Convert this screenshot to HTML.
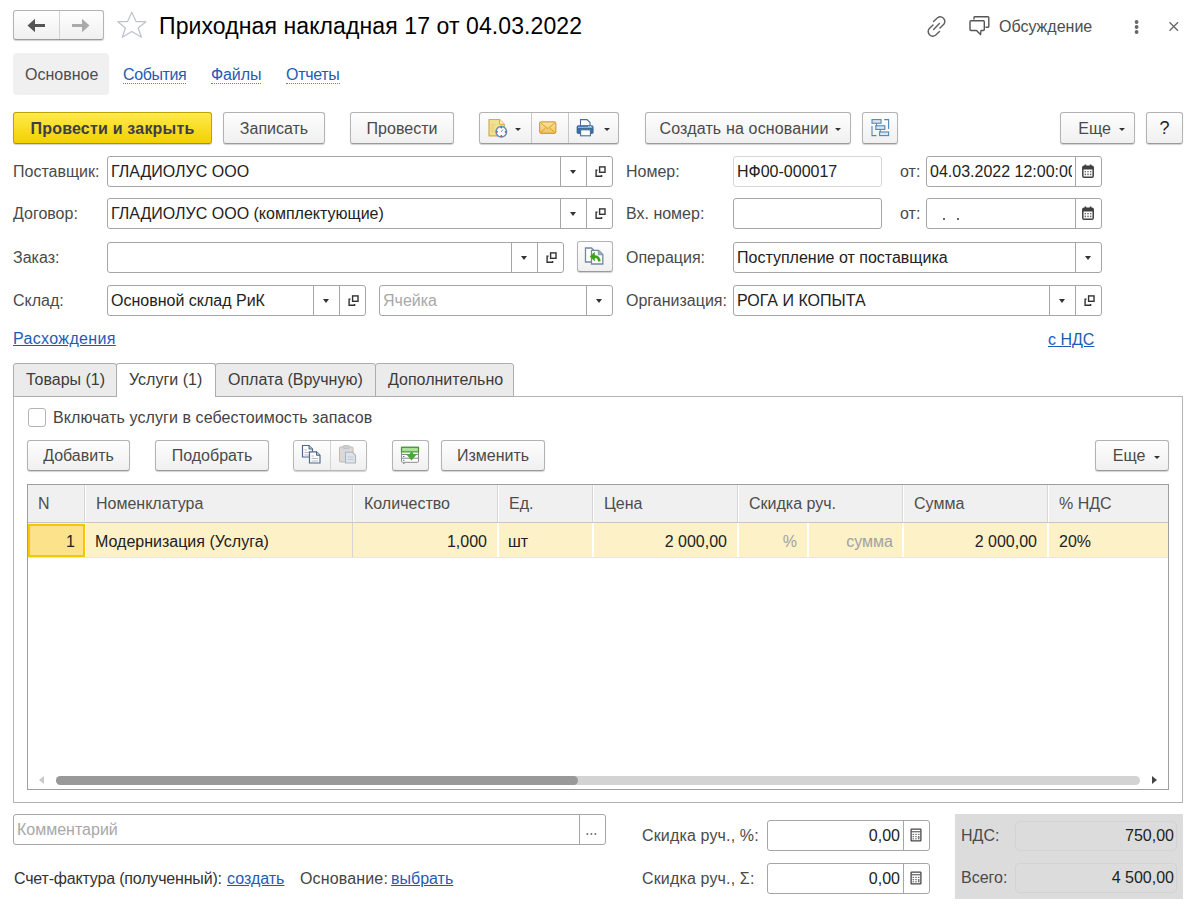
<!DOCTYPE html>
<html><head><meta charset="utf-8">
<style>
*{box-sizing:border-box;margin:0;padding:0}
html,body{width:1200px;height:910px;overflow:hidden;background:#fff}
body{position:relative;font-family:"Liberation Sans",sans-serif;font-size:16px;color:#222}
.a{position:absolute}
.t{position:absolute;white-space:nowrap;line-height:18px}
.btn{position:absolute;border:1px solid #b3b3b3;border-bottom-color:#9a9a9a;border-radius:3px;background:linear-gradient(#fefefe,#f0f0f0);box-shadow:0 1px 1px rgba(0,0,0,.18)}
.inp{position:absolute;border:1px solid #a6a6a6;background:#fff}
.u{text-decoration:underline}
.dot{border-bottom:1px dotted #5b86c5}
svg{overflow:visible}
</style></head><body>
<div class="btn" style="left:13px;top:10px;width:91px;height:30px;"></div>
<div class="a" style="left:59px;top:11px;width:1px;height:28px;background:#d2d2d2"></div>
<svg class="a" style="left:0;top:0" width="1200" height="50" viewBox="0 0 1200 50">
<path d="M27.5 25.5 L35 18.8 L35 32.2 Z" fill="#555"/><rect x="34" y="24" width="11" height="3" fill="#555"/>
<path d="M89.5 25.5 L82 18.8 L82 32.2 Z" fill="#aaa"/><rect x="72" y="24" width="11" height="3" fill="#aaa"/>
<path d="M131.8 12.3 L136 21.6 L145.8 21.7 L138.2 28 L141.4 37.3 L131.8 31.4 L122.3 37.3 L125.4 28 L117.9 21.7 L127.6 21.6 Z" fill="none" stroke="#bcc3cb" stroke-width="1.2" stroke-linejoin="round"/>
<g fill="none" stroke="#5e5e5e" stroke-width="1.4" stroke-linecap="round">
<path d="M933.5 21.5 L937.5 17.8 Q940.5 15.6 943.5 18.3 Q946 21.3 943.8 24.3 L940 28"/>
<path d="M939.5 31.5 L935.5 35.2 Q932.5 37.4 929.5 34.7 Q927 31.7 929.2 28.7 L933 25"/>
<path d="M933.6 29.4 L939.4 23.6"/>
</g>
<g fill="none" stroke="#555" stroke-width="1.4" stroke-linejoin="round">
<path d="M974 19.5 V17.5 Q974 16.8 975 16.8 H987.8 Q988.8 16.8 988.8 17.8 V26.5 Q988.8 27.2 988 27.3 H985.5"/>
<path d="M971 20.8 H983.3 Q984.3 20.8 984.3 21.8 V29.6 Q984.3 30.5 983.3 30.5 H981 L980.5 34.6 L976.5 30.5 H971 Q970 30.5 970 29.5 V21.8 Q970 20.8 971 20.8 Z"/>
</g>
<g fill="#666"><circle cx="1136.6" cy="22" r="1.9"/><circle cx="1136.6" cy="27" r="1.9"/><circle cx="1136.6" cy="32" r="1.9"/></g>
<path d="M1169.5 22.3 L1178 30.8 M1178 22.3 L1169.5 30.8" stroke="#666" stroke-width="1.3"/>
</svg>
<div class="t" style="left:159px;top:13px;color:#000;font-size:23px;line-height:26px;letter-spacing:0.1px;">Приходная накладная 17 от 04.03.2022</div>
<div class="t" style="left:999px;top:18px;color:#4d4d4d;font-size:16px;">Обсуждение</div>
<div class="a" style="left:13px;top:53px;width:96px;height:42px;background:#f0f0f0;border-radius:4px"></div>
<div class="t" style="left:25px;top:66px;color:#4d4d4d;font-size:16px;">Основное</div>
<div class="t" style="left:123px;top:66px;color:#1f5bb5;letter-spacing:-0.4px;line-height:17px"><span class="dot">События</span></div>
<div class="t" style="left:211px;top:66px;color:#1f5bb5;letter-spacing:-0.1px;line-height:17px"><span class="dot">Файлы</span></div>
<div class="t" style="left:286px;top:66px;color:#1f5bb5;letter-spacing:-0.3px;line-height:17px"><span class="dot">Отчеты</span></div>
<div class="btn" style="left:13px;top:112px;width:199px;height:32px;background:linear-gradient(#ffea4d,#f2d000);border-color:#bba300;border-bottom-color:#a89200"></div>
<div class="t" style="left:13px;top:120px;width:199px;text-align:center;color:#3d3d45;font-weight:bold;margin-left:0px;letter-spacing:0.2px">Провести и закрыть</div>
<div class="btn" style="left:223px;top:112px;width:102px;height:32px;"></div>
<div class="t" style="left:223px;top:120px;width:102px;text-align:center;color:#4a4a4a;margin-left:0px;">Записать</div>
<div class="btn" style="left:350px;top:112px;width:104px;height:32px;"></div>
<div class="t" style="left:350px;top:120px;width:104px;text-align:center;color:#4a4a4a;margin-left:0px;">Провести</div>
<div class="btn" style="left:479px;top:112px;width:140px;height:32px;"></div>
<div class="a" style="left:531px;top:113px;width:1px;height:30px;background:#c8c8c8"></div>
<div class="a" style="left:568px;top:113px;width:1px;height:30px;background:#c8c8c8"></div>
<div class="btn" style="left:645px;top:112px;width:206px;height:32px;"></div>
<div class="t" style="left:645px;top:120px;width:206px;text-align:center;color:#4a4a4a;margin-left:-4px;letter-spacing:0.15px">Создать на основании</div>
<div class="a" style="left:835.0px;top:128px;width:0;height:0;border-left:3.0px solid transparent;border-right:3.0px solid transparent;border-top:3.5px solid #333"></div>
<div class="btn" style="left:862px;top:112px;width:36px;height:32px;"></div>
<div class="btn" style="left:1060px;top:112px;width:75px;height:32px;"></div>
<div class="t" style="left:1060px;top:120px;width:75px;text-align:center;color:#4a4a4a;margin-left:-3px;">Еще</div>
<div class="a" style="left:1119.0px;top:128.3px;width:0;height:0;border-left:3.5px solid transparent;border-right:3.5px solid transparent;border-top:3.5px solid #333"></div>
<div class="btn" style="left:1146px;top:112px;width:37px;height:32px;"></div>
<div class="t" style="left:1146px;top:118px;color:#222;font-size:18px;width:37px;text-align:center;line-height:20px;">?</div>
<svg class="a" style="left:0;top:100px" width="1200" height="50" viewBox="0 100 1200 50">
<path d="M489 119.5 H499.5 L504.3 124.3 V135.8 H489 Z" fill="#f3e08e" stroke="#d1ad4c" stroke-width="1.2" stroke-linejoin="round"/>
<path d="M499.5 119.5 V124.3 H504.3" fill="#fff6c8" stroke="#d1ad4c" stroke-width="1"/>
<g stroke="#d8c480" stroke-width="0.9"><path d="M491 125 H495 M491 128 H494 M491 131 H494"/></g>
<circle cx="501.3" cy="131.8" r="5.3" fill="#fff" stroke="#5a8fc8" stroke-width="1.5"/>
<g fill="#e53030"><circle cx="501.3" cy="127.6" r="0.9"/><circle cx="501.3" cy="136" r="0.9"/><circle cx="497.1" cy="131.8" r="0.9"/><circle cx="505.5" cy="131.8" r="0.9"/></g>
<path d="M501 132 L503 129.5" stroke="#5a8fc8" stroke-width="1"/>
<rect x="539.6" y="121.8" width="16.2" height="11.6" rx="1.8" fill="url(#env)" stroke="#d9a030" stroke-width="1.2"/>
<defs><linearGradient id="env" x1="0" y1="0" x2="0" y2="1"><stop offset="0" stop-color="#fbe3a4"/><stop offset="1" stop-color="#f0c060"/></linearGradient></defs>
<path d="M540.5 122.8 L547.7 128.8 L554.9 122.8 M540.5 132.8 L545.5 128 M554.9 132.8 L549.9 128" fill="none" stroke="#d9a030" stroke-width="1"/>
<path d="M580.5 119.6 H587 L590 122.6 V126 H580.5 Z" fill="#fff" stroke="#4a6f96" stroke-width="1.1"/>
<rect x="576.6" y="125.2" width="17" height="8.8" rx="1.8" fill="#3d6d9f"/>
<rect x="578" y="126.8" width="14.2" height="1" fill="#a8c4e0"/>
<rect x="590" y="126" width="1.2" height="1" fill="#d0e0f0"/><rect x="588.2" y="126" width="1.2" height="1" fill="#d0e0f0"/>
<rect x="580.6" y="129.8" width="9.8" height="6" fill="#fff" stroke="#4a6f96" stroke-width="1.1"/>
<g fill="#d9e8f4" stroke="#4f86bb" stroke-width="1.1">
<rect x="872" y="119.6" width="9" height="3.6"/>
<rect x="875.8" y="125.8" width="9" height="3.6"/>
<rect x="879.6" y="132" width="9" height="3.6"/>
</g>
<path d="M876.5 123.5 V125.8 M880.3 129.7 V132" stroke="#4f86bb" stroke-width="1"/>
<path d="M872 126 V135.6 H876.5 M888.6 129 V119.6 H884.2" fill="none" stroke="#4f86bb" stroke-width="1.1"/>
</svg>
<div class="a" style="left:514.5px;top:128px;width:0;height:0;border-left:3.5px solid transparent;border-right:3.5px solid transparent;border-top:3.5px solid #333"></div>
<div class="a" style="left:603.5px;top:128px;width:0;height:0;border-left:3.5px solid transparent;border-right:3.5px solid transparent;border-top:3.5px solid #333"></div>
<div class="t" style="left:13px;top:163px;color:#4a4a4a;font-size:16px;">Поставщик:</div>
<div class="t" style="left:13px;top:205px;color:#4a4a4a;font-size:16px;">Договор:</div>
<div class="t" style="left:13px;top:249px;color:#4a4a4a;font-size:16px;">Заказ:</div>
<div class="t" style="left:13px;top:292px;color:#4a4a4a;font-size:16px;">Склад:</div>
<div class="inp" style="left:107px;top:156px;width:506px;height:31px;border-color:#a6a6a6;border-radius:3px"></div>
<div class="a" style="left:560px;top:157px;width:1px;height:29px;background:#a6a6a6"></div>
<div class="a" style="left:586px;top:157px;width:1px;height:29px;background:#a6a6a6"></div>
<div class="t" style="left:111px;top:163px;color:#222;font-size:16px;">ГЛАДИОЛУС ООО</div>
<div class="a" style="left:570.0px;top:169.5px;width:0;height:0;border-left:3.5px solid transparent;border-right:3.5px solid transparent;border-top:4px solid #333"></div>
<svg class="a" style="left:593.0px;top:165.0px" width="14" height="14" viewBox="0 0 14 14"><rect x="6.6" y="1.9" width="5.4" height="5.4" fill="none" stroke="#333" stroke-width="1.4"/><path d="M4.6 5.1 H3.1 V11.2 H8.6 V10" fill="none" stroke="#333" stroke-width="1.4"/></svg>
<div class="inp" style="left:107px;top:198px;width:506px;height:31px;border-color:#a6a6a6;border-radius:3px"></div>
<div class="a" style="left:560px;top:199px;width:1px;height:29px;background:#a6a6a6"></div>
<div class="a" style="left:586px;top:199px;width:1px;height:29px;background:#a6a6a6"></div>
<div class="t" style="left:111px;top:205px;color:#222;font-size:16px;">ГЛАДИОЛУС ООО (комплектующие)</div>
<div class="a" style="left:570.0px;top:211.5px;width:0;height:0;border-left:3.5px solid transparent;border-right:3.5px solid transparent;border-top:4px solid #333"></div>
<svg class="a" style="left:593.0px;top:207.0px" width="14" height="14" viewBox="0 0 14 14"><rect x="6.6" y="1.9" width="5.4" height="5.4" fill="none" stroke="#333" stroke-width="1.4"/><path d="M4.6 5.1 H3.1 V11.2 H8.6 V10" fill="none" stroke="#333" stroke-width="1.4"/></svg>
<div class="inp" style="left:107px;top:242px;width:457px;height:31px;border-color:#a6a6a6;border-radius:3px"></div>
<div class="a" style="left:511px;top:243px;width:1px;height:29px;background:#a6a6a6"></div>
<div class="a" style="left:537px;top:243px;width:1px;height:29px;background:#a6a6a6"></div>
<div class="a" style="left:521.0px;top:255.5px;width:0;height:0;border-left:3.5px solid transparent;border-right:3.5px solid transparent;border-top:4px solid #333"></div>
<svg class="a" style="left:544.0px;top:251.0px" width="14" height="14" viewBox="0 0 14 14"><rect x="6.6" y="1.9" width="5.4" height="5.4" fill="none" stroke="#333" stroke-width="1.4"/><path d="M4.6 5.1 H3.1 V11.2 H8.6 V10" fill="none" stroke="#333" stroke-width="1.4"/></svg>
<div class="btn" style="left:577px;top:241px;width:36px;height:31px;"></div>
<svg class="a" style="left:0;top:0" width="1" height="1" viewBox="0 0 1 1">
<path d="M585.5 248 H591.5 L594 250.5 V262 H585.5 Z" fill="#fff" stroke="#6f8a9e" stroke-width="1.3"/>
<path d="M591.5 250.3 H598.5 L602.8 254.6 V264 H591.5 Z" fill="#fff" stroke="#6f8a9e" stroke-width="1.3"/>
<path d="M598.3 250.5 V254.8 H602.6" fill="#9fb3c2" stroke="#7f98aa" stroke-width="1"/>
<path d="M589.8 256.6 L594.8 251.8 V261.4 Z" fill="#39a51a"/><path d="M594 256.6 Q599.3 256.3 599.3 261.5" fill="none" stroke="#39a51a" stroke-width="2.6"/>
</svg>
<div class="inp" style="left:107px;top:285px;width:259px;height:31px;border-color:#a6a6a6;border-radius:3px"></div>
<div class="a" style="left:313px;top:286px;width:1px;height:29px;background:#a6a6a6"></div>
<div class="a" style="left:339px;top:286px;width:1px;height:29px;background:#a6a6a6"></div>
<div class="t" style="left:111px;top:292px;color:#222;font-size:16px;">Основной склад РиК</div>
<div class="a" style="left:323.0px;top:298.5px;width:0;height:0;border-left:3.5px solid transparent;border-right:3.5px solid transparent;border-top:4px solid #333"></div>
<svg class="a" style="left:346.0px;top:294.0px" width="14" height="14" viewBox="0 0 14 14"><rect x="6.6" y="1.9" width="5.4" height="5.4" fill="none" stroke="#333" stroke-width="1.4"/><path d="M4.6 5.1 H3.1 V11.2 H8.6 V10" fill="none" stroke="#333" stroke-width="1.4"/></svg>
<div class="inp" style="left:379px;top:285px;width:234px;height:31px;border-color:#a6a6a6;border-radius:3px"></div>
<div class="a" style="left:586px;top:286px;width:1px;height:29px;background:#a6a6a6"></div>
<div class="t" style="left:383px;top:292px;color:#a8a8a8;font-size:16px;">Ячейка</div>
<div class="a" style="left:596.0px;top:298.5px;width:0;height:0;border-left:3.5px solid transparent;border-right:3.5px solid transparent;border-top:4px solid #333"></div>
<div class="t" style="left:13px;top:330px;color:#1f5bb5;letter-spacing:0.35px"><span class="u">Расхождения</span></div>
<div class="t" style="left:626px;top:163px;color:#4a4a4a;font-size:16px;">Номер:</div>
<div class="t" style="left:626px;top:205px;color:#4a4a4a;font-size:16px;">Вх. номер:</div>
<div class="t" style="left:626px;top:249px;color:#4a4a4a;font-size:16px;">Операция:</div>
<div class="t" style="left:626px;top:292px;color:#4a4a4a;font-size:16px;">Организация:</div>
<div class="t" style="left:900px;top:163px;color:#4a4a4a;font-size:16px;">от:</div>
<div class="t" style="left:900px;top:205px;color:#4a4a4a;font-size:16px;">от:</div>
<div class="inp" style="left:733px;top:156px;width:149px;height:31px;border-color:#d6d6d6;border-radius:3px"></div>
<div class="t" style="left:737px;top:163px;color:#222;font-size:16px;">НФ00-000017</div>
<div class="inp" style="left:926px;top:156px;width:176px;height:31px;border-color:#a6a6a6;border-radius:3px"></div>
<div class="a" style="left:1075px;top:157px;width:1px;height:29px;background:#a6a6a6"></div>
<div class="t" style="left:930px;top:163px;color:#222;font-size:16px;width:142px;overflow:hidden;">04.03.2022 12:00:00</div>
<svg class="a" style="left:1082.0px;top:164.0px" width="12" height="14" viewBox="0 0 12 14"><rect x="0.8" y="2.3" width="10.4" height="10.9" rx="1.3" fill="#fff" stroke="#404040" stroke-width="1.5"/><rect x="0.8" y="2.3" width="10.4" height="3.2" fill="#404040"/><rect x="2.6" y="0.5" width="1.6" height="2.6" fill="#404040"/><rect x="7.8" y="0.5" width="1.6" height="2.6" fill="#404040"/><g fill="#666"><rect x="2.6" y="7" width="1.4" height="1.3"/><rect x="5.3" y="7" width="1.4" height="1.3"/><rect x="8" y="7" width="1.4" height="1.3"/><rect x="2.6" y="9.6" width="1.4" height="1.6"/><rect x="5.3" y="9.6" width="1.4" height="1.6"/><rect x="8" y="9.6" width="1.4" height="1.6"/></g></svg>
<div class="inp" style="left:733px;top:198px;width:149px;height:31px;border-color:#a6a6a6;border-radius:3px"></div>
<div class="inp" style="left:926px;top:198px;width:176px;height:31px;border-color:#a6a6a6;border-radius:3px"></div>
<div class="a" style="left:1075px;top:199px;width:1px;height:29px;background:#a6a6a6"></div>
<svg class="a" style="left:1082.0px;top:206.0px" width="12" height="14" viewBox="0 0 12 14"><rect x="0.8" y="2.3" width="10.4" height="10.9" rx="1.3" fill="#fff" stroke="#404040" stroke-width="1.5"/><rect x="0.8" y="2.3" width="10.4" height="3.2" fill="#404040"/><rect x="2.6" y="0.5" width="1.6" height="2.6" fill="#404040"/><rect x="7.8" y="0.5" width="1.6" height="2.6" fill="#404040"/><g fill="#666"><rect x="2.6" y="7" width="1.4" height="1.3"/><rect x="5.3" y="7" width="1.4" height="1.3"/><rect x="8" y="7" width="1.4" height="1.3"/><rect x="2.6" y="9.6" width="1.4" height="1.6"/><rect x="5.3" y="9.6" width="1.4" height="1.6"/><rect x="8" y="9.6" width="1.4" height="1.6"/></g></svg>
<div class="a" style="left:943px;top:218px;width:2px;height:2px;background:#666"></div>
<div class="a" style="left:957px;top:218px;width:2px;height:2px;background:#666"></div>
<div class="inp" style="left:733px;top:242px;width:369px;height:31px;border-color:#a6a6a6;border-radius:3px"></div>
<div class="a" style="left:1075px;top:243px;width:1px;height:29px;background:#a6a6a6"></div>
<div class="t" style="left:737px;top:249px;color:#222;font-size:16px;">Поступление от поставщика</div>
<div class="a" style="left:1085.0px;top:255.5px;width:0;height:0;border-left:3.5px solid transparent;border-right:3.5px solid transparent;border-top:4px solid #333"></div>
<div class="inp" style="left:733px;top:285px;width:369px;height:31px;border-color:#a6a6a6;border-radius:3px"></div>
<div class="a" style="left:1049px;top:286px;width:1px;height:29px;background:#a6a6a6"></div>
<div class="a" style="left:1075px;top:286px;width:1px;height:29px;background:#a6a6a6"></div>
<div class="t" style="left:737px;top:292px;color:#222;font-size:16px;">РОГА И КОПЫТА</div>
<div class="a" style="left:1059.0px;top:298.5px;width:0;height:0;border-left:3.5px solid transparent;border-right:3.5px solid transparent;border-top:4px solid #333"></div>
<svg class="a" style="left:1082.0px;top:294.0px" width="14" height="14" viewBox="0 0 14 14"><rect x="6.6" y="1.9" width="5.4" height="5.4" fill="none" stroke="#333" stroke-width="1.4"/><path d="M4.6 5.1 H3.1 V11.2 H8.6 V10" fill="none" stroke="#333" stroke-width="1.4"/></svg>
<div class="t" style="left:1048px;top:331px;color:#1f5bb5"><span class="u">с НДС</span></div>
<div class="a" style="left:13px;top:396px;width:1170px;height:407px;border:1px solid #b4b4b4"></div>
<div class="a" style="left:13px;top:363px;width:104px;height:34px;background:#ebebeb;border:1px solid #adadad;border-radius:3px 3px 0 0"></div>
<div class="a" style="left:116px;top:363px;width:100px;height:34px;background:#fff;border:1px solid #adadad;border-bottom:none;border-radius:3px 3px 0 0"></div>
<div class="a" style="left:215px;top:363px;width:161px;height:34px;background:#ebebeb;border:1px solid #adadad;border-radius:3px 3px 0 0"></div>
<div class="a" style="left:375px;top:363px;width:139px;height:34px;background:#ebebeb;border:1px solid #adadad;border-radius:3px 3px 0 0"></div>
<div class="t" style="left:26px;top:371px;color:#3c3c3c;font-size:16px;">Товары (1)</div>
<div class="t" style="left:129px;top:371px;color:#3c3c3c;font-size:16px;">Услуги (1)</div>
<div class="t" style="left:228px;top:371px;color:#3c3c3c;font-size:16px;">Оплата (Вручную)</div>
<div class="t" style="left:388px;top:371px;color:#3c3c3c;font-size:16px;">Дополнительно</div>
<div class="a" style="left:28px;top:408px;width:18px;height:19px;border:1.5px solid #b3b3b3;border-radius:3px;background:#fff"></div>
<div class="t" style="left:53px;top:409px;color:#444;font-size:16px;letter-spacing:0.08px;">Включать услуги в себестоимость запасов</div>
<div class="btn" style="left:27px;top:440px;width:103px;height:31px;"></div>
<div class="t" style="left:27px;top:447px;width:103px;text-align:center;color:#4a4a4a;margin-left:0px;">Добавить</div>
<div class="btn" style="left:155px;top:440px;width:114px;height:31px;"></div>
<div class="t" style="left:155px;top:447px;width:114px;text-align:center;color:#4a4a4a;margin-left:0px;">Подобрать</div>
<div class="btn" style="left:293px;top:440px;width:74px;height:31px;border-color:#b8b8b8"></div>
<div class="a" style="left:330px;top:441px;width:1px;height:29px;background:#d4d4d4"></div>
<div class="btn" style="left:392px;top:440px;width:37px;height:31px;"></div>
<div class="btn" style="left:441px;top:440px;width:104px;height:31px;"></div>
<div class="t" style="left:441px;top:447px;width:104px;text-align:center;color:#4a4a4a;margin-left:0px;">Изменить</div>
<div class="btn" style="left:1095px;top:440px;width:74px;height:31px;"></div>
<div class="t" style="left:1095px;top:447px;width:74px;text-align:center;color:#4a4a4a;margin-left:-3px;">Еще</div>
<div class="a" style="left:1153.8px;top:456px;width:0;height:0;border-left:3.5px solid transparent;border-right:3.5px solid transparent;border-top:3.5px solid #333"></div>
<svg class="a" style="left:0;top:0" width="1" height="1" viewBox="0 0 1 1">
<path d="M302.5 445.5 H309 L312.5 449 V457 H302.5 Z" fill="#fff" stroke="#51698a" stroke-width="1.2"/>
<path d="M309 445.5 V449 H312.5" fill="#b9c7d6" stroke="#51698a" stroke-width="1"/>
<path d="M304.5 450 H307 M304.5 452.5 H310 M304.5 455 H310" stroke="#9aa8b8" stroke-width="0.8"/>
<path d="M309.5 451.8 H316.5 L320 455.3 V463 H309.5 Z" fill="#fff" stroke="#51698a" stroke-width="1.2"/>
<path d="M316.5 451.8 V455.3 H320" fill="#b9c7d6" stroke="#51698a" stroke-width="1"/>
<path d="M311.5 456 H314 M311.5 458.5 H318 M311.5 461 H318" stroke="#9aa8b8" stroke-width="0.8"/>
<rect x="339.5" y="447" width="13.5" height="15" rx="1" fill="#d9d9d9" stroke="#c9b7a8" stroke-width="1"/>
<rect x="343" y="445.5" width="6.5" height="3" rx="1" fill="#c8ced6" stroke="#b8bec6" stroke-width="0.8"/>
<path d="M345.5 452.3 H352.5 L355.5 455.3 V463 H345.5 Z" fill="#dfe4ea" stroke="#a9b6c4" stroke-width="1.1"/>
<path d="M347.5 457 H353.5 M347.5 459.5 H353.5" stroke="#b6c2ce" stroke-width="0.8"/>
<rect x="401.5" y="447.3" width="17" height="15" rx="1" fill="#fff" stroke="#8a8a8a" stroke-width="1"/>
<rect x="401.5" y="447.3" width="17" height="4.6" fill="#a9e293" stroke="#3f9b2c" stroke-width="1.2"/>
<path d="M402 454.5 H418 M402 458.2 H418" stroke="#8a8a8a" stroke-width="1"/>
<path d="M406 454 Q410 455 411.3 451.5 V451 H411.8 V451.5 Q413 455 417 454 L411.5 460.5 Z" fill="#4aa83a"/>
<g fill="#5a7fb0"><rect x="403" y="456" width="1.5" height="1"/><rect x="403" y="459.8" width="1.5" height="1"/><rect x="403" y="463" width="1.5" height="0.8"/></g>
</svg>
<div class="a" style="left:27px;top:484px;width:1142px;height:306px;border:1px solid #9e9e9e;background:#fff"></div>
<div class="a" style="left:28px;top:485px;width:1140px;height:38px;background:#f0f0f0"></div>
<div class="a" style="left:28px;top:522px;width:1140px;height:1px;background:#c6c6c6"></div>
<div class="a" style="left:28px;top:523px;width:1140px;height:34px;background:#fdf1c7"></div>
<div class="a" style="left:28px;top:557px;width:1140px;height:1px;background:#e6e6e6"></div>
<div class="a" style="left:84px;top:485px;width:1px;height:37px;background:#d6d6d6"></div>
<div class="a" style="left:85px;top:485px;width:1px;height:37px;background:#fff"></div>
<div class="a" style="left:84px;top:523px;width:2px;height:34px;background:#fff"></div>
<div class="a" style="left:352px;top:485px;width:1px;height:37px;background:#d6d6d6"></div>
<div class="a" style="left:353px;top:485px;width:1px;height:37px;background:#fff"></div>
<div class="a" style="left:352px;top:523px;width:1px;height:34px;background:#d4d4d4"></div>
<div class="a" style="left:497px;top:485px;width:1px;height:37px;background:#d6d6d6"></div>
<div class="a" style="left:498px;top:485px;width:1px;height:37px;background:#fff"></div>
<div class="a" style="left:497px;top:523px;width:2px;height:34px;background:#fff"></div>
<div class="a" style="left:592px;top:485px;width:1px;height:37px;background:#d6d6d6"></div>
<div class="a" style="left:593px;top:485px;width:1px;height:37px;background:#fff"></div>
<div class="a" style="left:592px;top:523px;width:2px;height:34px;background:#fff"></div>
<div class="a" style="left:737px;top:485px;width:1px;height:37px;background:#d6d6d6"></div>
<div class="a" style="left:738px;top:485px;width:1px;height:37px;background:#fff"></div>
<div class="a" style="left:737px;top:523px;width:2px;height:34px;background:#fff"></div>
<div class="a" style="left:902px;top:485px;width:1px;height:37px;background:#d6d6d6"></div>
<div class="a" style="left:903px;top:485px;width:1px;height:37px;background:#fff"></div>
<div class="a" style="left:902px;top:523px;width:2px;height:34px;background:#fff"></div>
<div class="a" style="left:1047px;top:485px;width:1px;height:37px;background:#d6d6d6"></div>
<div class="a" style="left:1048px;top:485px;width:1px;height:37px;background:#fff"></div>
<div class="a" style="left:1047px;top:523px;width:2px;height:34px;background:#fff"></div>
<div class="a" style="left:807px;top:523px;width:2px;height:34px;background:#fff"></div>
<div class="t" style="left:38px;top:495px;color:#4d4d4d;font-size:16px;">N</div>
<div class="t" style="left:96px;top:495px;color:#4d4d4d;font-size:16px;">Номенклатура</div>
<div class="t" style="left:364px;top:495px;color:#4d4d4d;font-size:16px;">Количество</div>
<div class="t" style="left:509px;top:495px;color:#4d4d4d;font-size:16px;">Ед.</div>
<div class="t" style="left:604px;top:495px;color:#4d4d4d;font-size:16px;">Цена</div>
<div class="t" style="left:749px;top:495px;color:#4d4d4d;font-size:16px;">Скидка руч.</div>
<div class="t" style="left:914px;top:495px;color:#4d4d4d;font-size:16px;">Сумма</div>
<div class="t" style="left:1059px;top:495px;color:#4d4d4d;font-size:16px;">% НДС</div>
<div class="a" style="left:28px;top:524px;width:57px;height:33px;border:2px solid #f7c600;background:#fce38b"></div>
<div class="t" style="right:1125px;top:533px;color:#222;">1</div>
<div class="t" style="left:95px;top:533px;color:#222;font-size:16px;">Модернизация (Услуга)</div>
<div class="t" style="right:713px;top:533px;color:#222;">1,000</div>
<div class="t" style="left:508px;top:533px;color:#222;font-size:16px;">шт</div>
<div class="t" style="right:473px;top:533px;color:#222;">2 000,00</div>
<div class="t" style="right:403px;top:533px;color:#a2a2a2;">%</div>
<div class="t" style="right:307px;top:533px;color:#a2a2a2;">сумма</div>
<div class="t" style="right:163px;top:533px;color:#222;">2 000,00</div>
<div class="t" style="left:1059px;top:533px;color:#222;font-size:16px;">20%</div>
<div class="a" style="left:56px;top:776px;width:1084px;height:9px;background:#d3d3d3;border-radius:5px"></div>
<div class="a" style="left:56px;top:776px;width:522px;height:9px;background:#999;border-radius:5px"></div>
<div class="a" style="left:39px;top:776px;width:0;height:0;border-top:4px solid transparent;border-bottom:4px solid transparent;border-right:5px solid #c8c8c8"></div>
<div class="a" style="left:1152px;top:776px;width:0;height:0;border-top:4px solid transparent;border-bottom:4px solid transparent;border-left:5px solid #444"></div>
<div class="inp" style="left:13px;top:814px;width:593px;height:31px;border-color:#a6a6a6;border-radius:3px"></div>
<div class="a" style="left:579px;top:815px;width:1px;height:29px;background:#a6a6a6"></div>
<div class="t" style="left:17px;top:821px;color:#a8a8a8;font-size:16px;">Комментарий</div>
<svg class="a" style="left:0;top:0" width="1" height="1"><g fill="#555"><rect x="586.6" y="833.2" width="1.6" height="1.6"/><rect x="590.6" y="833.2" width="1.6" height="1.6"/><rect x="594.6" y="833.2" width="1.6" height="1.6"/></g></svg>
<div class="t" style="left:14px;top:870px;color:#333;font-size:16px;letter-spacing:-0.18px;">Счет-фактура (полученный):</div>
<div class="t" style="left:227px;top:870px;color:#1f5bb5"><span class="u">создать</span></div>
<div class="t" style="left:300px;top:870px;color:#444;font-size:16px;letter-spacing:0.15px;">Основание:</div>
<div class="t" style="left:391px;top:870px;color:#1f5bb5"><span class="u">выбрать</span></div>
<div class="t" style="left:642px;top:827px;color:#4a4a4a;font-size:16px;letter-spacing:0.15px;">Скидка руч., %:</div>
<div class="t" style="left:642px;top:870px;color:#4a4a4a;font-size:16px;letter-spacing:0.15px;">Скидка руч., Σ:</div>
<div class="inp" style="left:767px;top:820px;width:163px;height:31px;border-color:#a6a6a6;border-radius:3px"></div>
<div class="a" style="left:903px;top:821px;width:1px;height:29px;background:#a6a6a6"></div>
<svg class="a" style="left:910.0px;top:828.0px" width="12" height="14" viewBox="0 0 12 14"><rect x="1.1" y="1.1" width="9.8" height="11.8" rx="0.6" fill="#fff" stroke="#444" stroke-width="1.3"/><rect x="1.6" y="3.2" width="8.8" height="1.1" fill="#555"/><g fill="#777"><rect x="2.5" y="5.8" width="1.6" height="1.2"/><rect x="5.2" y="5.8" width="1.6" height="1.2"/><rect x="7.9" y="5.8" width="1.6" height="1.2"/><rect x="2.5" y="8" width="1.6" height="1.2"/><rect x="5.2" y="8" width="1.6" height="1.2"/><rect x="7.9" y="8" width="1.6" height="3.4"/><rect x="2.5" y="10.2" width="1.6" height="1.2"/><rect x="5.2" y="10.2" width="1.6" height="1.2"/></g></svg>
<div class="t" style="right:300px;top:827px;color:#222;">0,00</div>
<div class="inp" style="left:767px;top:863px;width:163px;height:31px;border-color:#a6a6a6;border-radius:3px"></div>
<div class="a" style="left:903px;top:864px;width:1px;height:29px;background:#a6a6a6"></div>
<svg class="a" style="left:910.0px;top:871.0px" width="12" height="14" viewBox="0 0 12 14"><rect x="1.1" y="1.1" width="9.8" height="11.8" rx="0.6" fill="#fff" stroke="#444" stroke-width="1.3"/><rect x="1.6" y="3.2" width="8.8" height="1.1" fill="#555"/><g fill="#777"><rect x="2.5" y="5.8" width="1.6" height="1.2"/><rect x="5.2" y="5.8" width="1.6" height="1.2"/><rect x="7.9" y="5.8" width="1.6" height="1.2"/><rect x="2.5" y="8" width="1.6" height="1.2"/><rect x="5.2" y="8" width="1.6" height="1.2"/><rect x="7.9" y="8" width="1.6" height="3.4"/><rect x="2.5" y="10.2" width="1.6" height="1.2"/><rect x="5.2" y="10.2" width="1.6" height="1.2"/></g></svg>
<div class="t" style="right:300px;top:870px;color:#222;">0,00</div>
<div class="a" style="left:955px;top:814px;width:228px;height:85px;background:#dcdcdc"></div>
<div class="a" style="left:1015px;top:821px;width:162px;height:30px;border:1px solid #d3d3d3;border-radius:4px"></div>
<div class="a" style="left:1015px;top:863px;width:162px;height:30px;border:1px solid #d3d3d3;border-radius:4px"></div>
<div class="t" style="left:961px;top:827px;color:#4a4a4a;font-size:16px;">НДС:</div>
<div class="t" style="right:26px;top:827px;color:#222;">750,00</div>
<div class="t" style="left:961px;top:869px;color:#4a4a4a;font-size:16px;">Всего:</div>
<div class="t" style="right:26px;top:869px;color:#222;">4 500,00</div>
</body></html>
